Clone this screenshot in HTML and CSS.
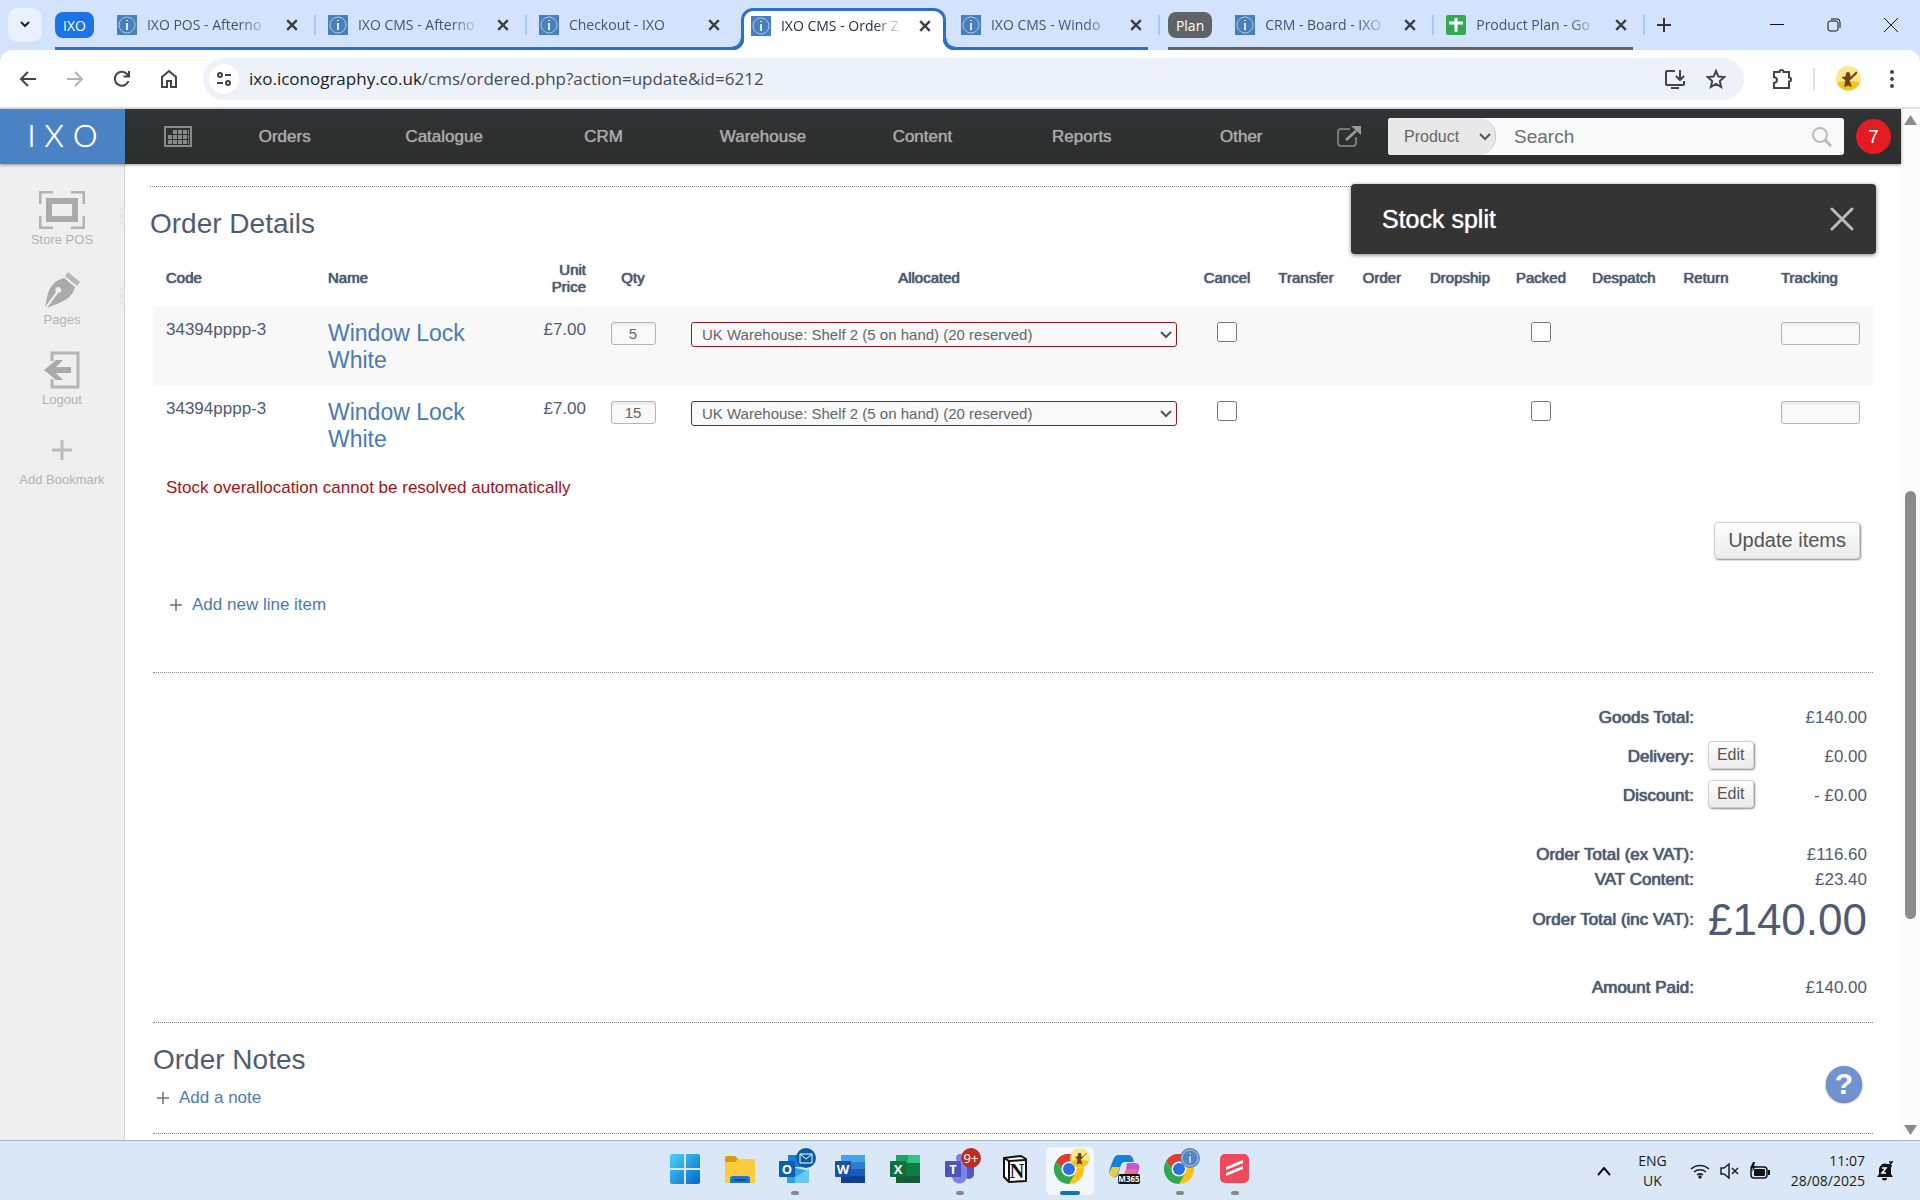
FILE: index.html
```html
<!DOCTYPE html>
<html lang="en">

<head>
    <meta charset="utf-8">
    <title>IXO CMS - Order</title>
    <meta name="viewport" content="width=device-width, initial-scale=1">
    <link rel="stylesheet" href="styles.css">
</head>

<body>
    <!-- Icons used more than once -->
    <svg class="defs" aria-hidden="true">
        <symbol id="ixo" viewBox="0 0 20 20">
            <rect width="20" height="20" fill="#4a7fbd" />
            <circle cx="10" cy="10" r="8" fill="none" stroke="#a9c8ec" />
            <path d="M10 8v7M10 5v1" stroke="#dceaff" stroke-width="2" />
        </symbol>
        <symbol id="cross" viewBox="0 0 10 10">
            <path d="M1 1l8 8M9 1l-8 8" fill="none" stroke="currentColor" stroke-width="2" />
        </symbol>
        <symbol id="plus" viewBox="0 0 12 12">
            <path d="M6 0v12M0 6h12" fill="none" stroke="currentColor" stroke-width="1.5" />
        </symbol>
        <symbol id="chrome" viewBox="0 0 30 30">
            <path d="M15 15L2 7.500A15 15 0 0 1 28 7.500H15z" fill="#e33b2e" />
            <path d="M15 15L28 7.500A15 15 0 0 1 15 30l-1-6z" fill="#fbc116" />
            <path d="M2 7.500A15 15 0 0 0 15 30l6.500-11.200L8.500 18.800z" fill="#2da94f" />
            <path d="M2 7.500l6.500 11.300L12 8z" fill="#2da94f" />
            <path d="M2 7.500A15 15 0 0 1 28 7.500H15a7.500 7.500 0 0 0-7 5z" fill="#e33b2e" />
            <circle cx="15" cy="15" r="7.500" fill="#fff" />
            <circle cx="15" cy="15" r="6" fill="#2a6fe8" />
        </symbol>
        <symbol id="avatar" viewBox="0 0 24 24">
            <circle cx="12" cy="12" r="12" fill="#fbe78c" />
            <path d="M1 16a12 12 0 0 0 22 0c-6-2-15-2-22 0z" fill="#f2c521" />
            <path d="M8 19l1-5-2-2 2-2 1-4h3l1 4 1 2-2 2 2 5z" fill="#71401a" />
            <path d="M6 11l8 1 6-6M9 19v1M14 19v1" fill="none" stroke="#71401a" />
        </symbol>
    </svg>

    <!-- Browser tabs -->
    <header class="tab-strip">
        <button class="tab-search" aria-label="Search tabs"><svg width="12" height="12" viewBox="0 0 12 12"><path d="M2 4l4 4 4-4" fill="none" stroke="#222" stroke-width="2" /></svg></button>
        <div class="tab-group">
            <button class="chip">IXO</button>
            <div class="tab"><svg class="favicon"><use href="#ixo" /></svg><span>IXO POS - Afterno</span><button aria-label="Close tab"><svg><use href="#cross" /></svg></button></div>
            <div class="tab"><svg class="favicon"><use href="#ixo" /></svg><span>IXO CMS - Afterno</span><button aria-label="Close tab"><svg><use href="#cross" /></svg></button></div>
            <div class="tab no-line"><svg class="favicon"><use href="#ixo" /></svg><span>Checkout - IXO</span><button aria-label="Close tab"><svg><use href="#cross" /></svg></button></div>
            <div class="tab active"><svg class="favicon"><use href="#ixo" /></svg><span>IXO CMS - Order Z</span><button aria-label="Close tab"><svg><use href="#cross" /></svg></button></div>
            <div class="tab"><svg class="favicon"><use href="#ixo" /></svg><span>IXO CMS - Windo</span><button aria-label="Close tab"><svg><use href="#cross" /></svg></button></div>
        </div>
        <div class="tab-group plan">
            <button class="chip">Plan</button>
            <div class="tab"><svg class="favicon"><use href="#ixo" /></svg><span>CRM - Board - IXO</span><button aria-label="Close tab"><svg><use href="#cross" /></svg></button></div>
            <div class="tab"><svg class="favicon" viewBox="0 0 20 20"><rect width="20" height="20" rx="2" fill="#34a853" /><path d="M10 3v14M3 8h14" stroke="#fff" stroke-width="3" /></svg><span>Product Plan - Go</span><button aria-label="Close tab"><svg><use href="#cross" /></svg></button></div>
        </div>
        <button class="new-tab" aria-label="New tab"><svg width="14" height="14" viewBox="0 0 14 14"><path d="M7 0v14M0 7h14" stroke="#333" stroke-width="2" /></svg></button>
        <div class="window-buttons">
            <button aria-label="Minimise"><svg width="14" height="14" viewBox="0 0 14 14"><path d="M0 6.500h14" stroke="#111" /></svg></button>
            <button aria-label="Restore"><svg width="14" height="14" viewBox="0 0 14 14" fill="none" stroke="#111"><rect x="1" y="3" width="10" height="10" rx="2" /><path d="M4 1h6a3 3 0 0 1 3 3v6" /></svg></button>
            <button aria-label="Close"><svg width="14" height="14" viewBox="0 0 14 14"><path d="M0 0l14 14M14 0L0 14" stroke="#111" /></svg></button>
        </div>
    </header>

    <!-- Address bar -->
    <div class="toolbar">
        <button aria-label="Back"><svg width="20" height="20" viewBox="0 0 20 20"><path d="M18 10H3M10 3l-7 7 7 7" /></svg></button>
        <button class="faded" aria-label="Forward"><svg width="20" height="20" viewBox="0 0 20 20"><path d="M2 10h15M10 3l7 7-7 7" /></svg></button>
        <button aria-label="Reload"><svg width="20" height="20" viewBox="0 0 20 20"><path d="M16.500 12A7 7 0 1 1 15 5l2 2M17 2v5.500h-5.500" /></svg></button>
        <button aria-label="Home"><svg width="20" height="20" viewBox="0 0 20 20"><path d="M3 8l7-6 7 6v10h-5v-6H8v6H3z" /></svg></button>
        <div class="omnibox">
            <button class="site-info" aria-label="Site information"><svg width="18" height="18" viewBox="0 0 18 18"><circle cx="5" cy="5" r="2" /><path d="M10 5h6M2 13h6" /><circle cx="13" cy="13" r="2" /></svg></button>
            <div class="url"><b>ixo.iconography.co.uk</b>/cms/ordered.php?action=update&amp;id=6212</div>
            <button aria-label="Install app"><svg width="22" height="22" viewBox="0 0 22 22"><path d="M11 3H3a1 1 0 0 0-1 1v12a1 1 0 0 0 1 1h16a1 1 0 0 0 1-1v-3M7 20h8M16 2v9M12 8l4 4 4-4" /></svg></button>
            <button aria-label="Bookmark this tab"><svg width="20" height="20" viewBox="0 0 20 20"><path d="M10 2l2.400 5.600 6 .5-4.600 4 1.400 5.900L10 15l-5.200 3 1.400-5.900-4.600-4 6-.5z" /></svg></button>
        </div>
        <button class="extensions" aria-label="Extensions"><svg width="22" height="22" viewBox="0 0 22 22"><path d="M3 4h5.500a2 2 0 0 1 4 0H18v5.500a2 2 0 0 1 0 4V20H3v-5c4-.500 4-5.500 0-6z" /></svg></button>
        <button class="profile" aria-label="Profile"><svg width="25" height="25"><use href="#avatar" /></svg></button>
        <button aria-label="Menu"><svg width="20" height="20" viewBox="0 0 20 20"><g fill="#444" stroke="none"><circle cx="10" cy="3" r="2" /><circle cx="10" cy="10" r="2" /><circle cx="10" cy="17" r="2" /></g></svg></button>
    </div>

    <div class="page">
        <div class="app">
            <header class="app-header">
                <a class="logo" href="#"><span>I</span><span>X</span><span>O</span></a>
                <a class="calendar" href="#" aria-label="Calendar"><svg width="28" height="21" viewBox="0 0 28 21"><rect x="1" y="1" width="26" height="19" fill="none" stroke="#8a8a8a" stroke-width="2" /><path d="M9 6h16M4 11h21M4 16h21" stroke="#8a8a8a" stroke-width="4" stroke-dasharray="4 1" /></svg></a>
                <nav>
                    <a href="#">Orders</a>
                    <a href="#">Catalogue</a>
                    <a href="#">CRM</a>
                    <a href="#">Warehouse</a>
                    <a href="#">Content</a>
                    <a href="#">Reports</a>
                    <a href="#">Other</a>
                </nav>
                <a class="external" href="#" aria-label="Open site"><svg width="26" height="22" viewBox="0 0 26 22"><path d="M14 3H5a3 3 0 0 0-3 3v11a3 3 0 0 0 3 3h12a3 3 0 0 0 3-3v-6" fill="none" stroke="#777" stroke-width="2" /><path d="M10 14L20 5" stroke="#999" stroke-width="3" /><path d="M15 0h10v9z" fill="#999" /></svg></a>
                <form class="search">
                    <select aria-label="Search in">
                        <option>Product</option>
                    </select>
                    <input type="text" placeholder="Search" aria-label="Search">
                    <button type="button" aria-label="Search"><svg width="20" height="20" viewBox="0 0 20 20" fill="none" stroke="#bbb"><circle cx="8" cy="8" r="7" stroke-width="2" /><path d="M13 13l6 6" stroke-width="3" /></svg></button>
                </form>
                <button class="alerts">7</button>
            </header>

            <div class="columns">
                <aside class="sidebar">
                    <a class="grip" href="#"><svg width="46" height="38" viewBox="0 0 46 38"><path d="M1 13V1h13M32 1h13v12M45 25v12H32M14 37H1V25" fill="none" stroke="#b3b3b3" stroke-width="3" /><rect x="10" y="10" width="26" height="18" fill="none" stroke="#aaa" stroke-width="6" /></svg>Store POS</a>
                    <a class="grip" href="#"><svg width="36" height="38" viewBox="0 0 36 38"><path d="M24 1l12 10-3 4L21 5z" fill="#b9b9b9" /><path d="M20 7l11 9c-2 8-8 13-16 16L3 37l11-15a3 3 0 1 0-2-1L1 36l3-14C7 14 12 9 20 7z" fill="#aaa" /></svg>Pages</a>
                    <a href="#"><svg width="36" height="38" viewBox="0 0 36 38"><path d="M8 10V2h26v34H8v-8" fill="none" stroke="#b5b5b5" stroke-width="3" /><path d="M0 19l12-10h7l-7 7h15v6H12l7 7h-7z" fill="#aaa" /></svg>Logout</a>
                    <a href="#"><svg width="20" height="38" viewBox="0 0 20 38"><path d="M10 9v20M0 19h20" stroke="#bbb" stroke-width="3" /></svg>Add Bookmark</a>
                </aside>

                <main>
                    <section class="order-details">
                        <h2>Order Details</h2>
                        <table class="items">
                            <colgroup>
                                <col class="col-code">
                                <col class="col-name">
                                <col class="col-price">
                                <col class="col-qty">
                                <col>
                                <col class="col-cancel">
                                <col class="col-transfer">
                                <col class="col-order">
                                <col class="col-dropship">
                                <col class="col-packed">
                                <col class="col-despatch">
                                <col class="col-return">
                                <col class="col-tracking">
                            </colgroup>
                            <thead>
                                <tr>
                                    <th class="left">Code</th>
                                    <th class="left">Name</th>
                                    <th class="price">Unit Price</th>
                                    <th>Qty</th>
                                    <th>Allocated</th>
                                    <th>Cancel</th>
                                    <th>Transfer</th>
                                    <th>Order</th>
                                    <th>Dropship</th>
                                    <th>Packed</th>
                                    <th>Despatch</th>
                                    <th>Return</th>
                                    <th class="tracking">Tracking</th>
                                </tr>
                            </thead>
                            <tbody>
                                <tr>
                                    <td class="left">34394pppp-3</td>
                                    <td class="left"><a href="#">Window Lock White</a></td>
                                    <td class="price">£7.00</td>
                                    <td><input class="qty" type="text" value="5" aria-label="Qty"></td>
                                    <td class="allocated"><select aria-label="Allocated"><option>UK Warehouse: Shelf 2 (5 on hand) (20 reserved)</option></select></td>
                                    <td><input type="checkbox" aria-label="Cancel"></td>
                                    <td></td>
                                    <td></td>
                                    <td></td>
                                    <td><input type="checkbox" aria-label="Packed"></td>
                                    <td></td>
                                    <td></td>
                                    <td class="tracking"><input type="text" aria-label="Tracking"></td>
                                </tr>
                                <tr>
                                    <td class="left">34394pppp-3</td>
                                    <td class="left"><a href="#">Window Lock White</a></td>
                                    <td class="price">£7.00</td>
                                    <td><input class="qty" type="text" value="15" aria-label="Qty"></td>
                                    <td class="allocated"><select aria-label="Allocated"><option>UK Warehouse: Shelf 2 (5 on hand) (20 reserved)</option></select></td>
                                    <td><input type="checkbox" aria-label="Cancel"></td>
                                    <td></td>
                                    <td></td>
                                    <td></td>
                                    <td><input type="checkbox" aria-label="Packed"></td>
                                    <td></td>
                                    <td></td>
                                    <td class="tracking"><input type="text" aria-label="Tracking"></td>
                                </tr>
                            </tbody>
                        </table>
                        <p class="error">Stock overallocation cannot be resolved automatically</p>
                        <div class="actions"><button class="button large">Update items</button></div>
                        <a class="add line-item" href="#"><svg><use href="#plus" /></svg>Add new line item</a>
                    </section>

                    <section class="totals">
                        <table>
                            <tr>
                                <th>Goods Total:</th>
                                <td></td>
                                <td>£140.00</td>
                            </tr>
                            <tr>
                                <th>Delivery:</th>
                                <td class="edit"><button class="button">Edit</button></td>
                                <td>£0.00</td>
                            </tr>
                            <tr>
                                <th>Discount:</th>
                                <td class="edit"><button class="button">Edit</button></td>
                                <td>- £0.00</td>
                            </tr>
                            <tbody class="vat">
                                <tr>
                                    <th>Order Total (ex VAT):</th>
                                    <td></td>
                                    <td>£116.60</td>
                                </tr>
                                <tr>
                                    <th>VAT Content:</th>
                                    <td></td>
                                    <td>£23.40</td>
                                </tr>
                                <tr class="grand">
                                    <th>Order Total (inc VAT):</th>
                                    <td colspan="2">£140.00</td>
                                </tr>
                            </tbody>
                            <tbody class="paid">
                                <tr>
                                    <th>Amount Paid:</th>
                                    <td></td>
                                    <td>£140.00</td>
                                </tr>
                            </tbody>
                        </table>
                    </section>

                    <section class="notes">
                        <h2>Order Notes</h2>
                        <a class="add" href="#"><svg><use href="#plus" /></svg>Add a note</a>
                    </section>
                    <section class="next"></section>
                </main>
            </div>

            <div class="notification" role="status">
                Stock split
                <button aria-label="Dismiss"><svg width="24" height="24" viewBox="0 0 24 24"><path d="M2 2l20 20M22 2L2 22" stroke="#bbb" stroke-width="3" stroke-linecap="round" /></svg></button>
            </div>
            <button class="help" aria-label="Help">?</button>
        </div>

        <div class="scrollbar">
            <svg width="13" height="10" viewBox="0 0 13 10"><path d="M6.500 0L13 10H0z" fill="#8a8a8a" /></svg>
            <div class="thumb"></div>
            <svg width="13" height="10" viewBox="0 0 13 10"><path d="M0 0h13L6.500 10z" fill="#8a8a8a" /></svg>
        </div>
    </div>

    <!-- Windows taskbar -->
    <footer class="taskbar">
        <div class="tray-space"></div>
        <div class="apps">
            <button aria-label="Start"><svg viewBox="0 0 40 40"><defs><linearGradient id="win" x2="1" y2="1"><stop stop-color="#4fd0f8" /><stop offset="1" stop-color="#0068d0" /></linearGradient></defs><path d="M7 5h12v14H5V7a2 2 0 0 1 2-2zM21 5h12a2 2 0 0 1 2 2v12H21zM5 21h14v14H7a2 2 0 0 1-2-2zM21 21h14v12a2 2 0 0 1-2 2H21z" fill="url(#win)" /></svg></button>
            <button aria-label="File Explorer"><svg viewBox="0 0 40 40"><path d="M5 9a2 2 0 0 1 2-2h8l3 3v4H5z" fill="#d99a0c" /><path d="M5 13h10l3-3h15a2 2 0 0 1 2 2v22H5z" fill="#fdcb3f" /><path d="M10 34v-4a3 3 0 0 1 3-3h14a3 3 0 0 1 3 3v4z" fill="#1a78c8" /><path d="M14 31h12" stroke="#0b4c8c" stroke-width="2" /></svg></button>
            <button class="running" aria-label="Outlook"><svg viewBox="0 0 40 40"><path d="M13 6h20v12H13z" fill="#1a7fd4" /><path d="M12 17l22 5v10a2 2 0 0 1-2 2H12z" fill="#2ea3ea" /><path d="M20 28l14-8v12a2 2 0 0 1-2 2H20z" fill="#65c8f5" /><rect x="4" y="12" width="16" height="16" rx="1" fill="#0b5fb0" /><text x="12" y="25" class="letter">O</text><circle cx="31" cy="9" r="10" fill="#0b5aa6" /><path d="M25 5h12v9H25zl6 5 6-5" fill="none" stroke="#fff" /></svg></button>
            <button aria-label="Word"><svg viewBox="0 0 40 40"><path d="M11 6h24v8H11z" fill="#41a5ee" /><path d="M11 13h24v7H11z" fill="#2b7cd3" /><path d="M11 20h24v7H11z" fill="#185abd" /><path d="M11 27h24v7H11z" fill="#103f91" /><rect x="5" y="12" width="16" height="16" rx="1" fill="#1650a8" /><text x="13" y="25" class="letter">W</text></svg></button>
            <button aria-label="Excel"><svg viewBox="0 0 40 40"><path d="M11 6h24v28H11z" fill="#107c41" /><path d="M23 6h12v8H23z" fill="#33c481" /><path d="M11 6h12v8H11z" fill="#21a366" /><path d="M11 27h24v7H11z" fill="#185c37" /><rect x="5" y="12" width="16" height="16" rx="1" fill="#0f703b" /><text x="13" y="25" class="letter">X</text></svg></button>
            <button class="running" aria-label="Teams"><svg viewBox="0 0 40 40"><path d="M24 15h10v10a5 5 0 0 1-10 0z" fill="#5059c9" /><path d="M12 14h15v12a7 7 0 0 1-15 2z" fill="#7b83eb" /><circle cx="20" cy="9" r="4" fill="#7b83eb" /><rect x="5" y="12" width="16" height="16" rx="1" fill="#4b53bc" /><text x="13" y="25" class="letter">T</text><circle cx="31" cy="9" r="10" fill="#c22b23" /><text x="31" y="14" class="count">9+</text></svg></button>
            <button aria-label="Notion"><svg viewBox="0 0 40 40"><path d="M9 9l17-2 5 3v22l-17 1-5-5z" fill="#fff" stroke="#111" stroke-width="2" stroke-linejoin="round" /><path d="M9 9l5 3 17-1M14 12v21" stroke="#111" stroke-width="2" fill="none" /><text x="22" y="29" class="notion">N</text></svg></button>
            <button class="running current" aria-label="Chrome"><svg viewBox="0 0 40 40"><use href="#chrome" x="4" y="5" width="30" height="30" /><use href="#avatar" x="20" y="-1" width="20" height="20" /></svg></button>
            <button aria-label="Microsoft 365"><svg viewBox="0 0 40 40"><path d="M13 6h10c4 0 5 3 6 7h-9c-3 0-4 2-5 6l-2 6c-1 3-3 4-5 3-4-2-4-5-3-9l3-8c1-3 3-5 5-5z" fill="#1681d8" /><path d="M7 18h8l-3 8c-1 3-8 3-8-2z" fill="#e5cf48" /><path d="M22 14h8c4 0 5 3 4 6l-3 9c-1 4-4 5-7 5h-9c3 0 4-3 5-7z" fill="#c456d8" /><path d="M19 26l2-6h11l-3 8z" fill="#f0708c" /><rect x="13" y="25" width="22" height="10" rx="2" fill="#111" /><text x="24" y="33" class="m365">M365</text></svg></button>
            <button class="running" aria-label="Chrome"><svg viewBox="0 0 40 40"><use href="#chrome" x="4" y="5" width="30" height="30" /><circle cx="30" cy="9" r="10" fill="#5584be" /><circle cx="30" cy="9" r="8" fill="none" stroke="#a9c8ec" /><path d="M30 7v7M30 4v1" stroke="#a9c8ec" stroke-width="2" /></svg></button>
            <button class="running" aria-label="App"><svg viewBox="0 0 40 40"><rect x="5" y="5" width="29" height="29" rx="5" fill="#f0485c" /><path d="M11 18l12-5v3l-12 5zM16 22l12-5v3l-12 5zM11 24l12-5v3l-12 5zM16 16l12-5v3l-12 5z" fill="#fff" /></svg></button>
        </div>
        <div class="tray">
            <button aria-label="Hidden icons"><svg width="14" height="10" viewBox="0 0 14 10"><path d="M1 9l6-7 6 7" fill="none" stroke="#111" stroke-width="2" /></svg></button>
            <div class="language">ENG<br>UK</div>
            <div class="status">
                <svg width="20" height="18" viewBox="0 0 20 18" fill="none" stroke="#222" stroke-width="1.500"><path d="M1 7a13 13 0 0 1 18 0M4 10a9 9 0 0 1 12 0M7 13a5 5 0 0 1 6 0" /><circle cx="10" cy="15" r="1" fill="#222" /></svg>
                <svg width="20" height="18" viewBox="0 0 20 18" fill="none" stroke="#222" stroke-width="1.500"><path d="M1 6h3l5-4v14l-5-4H1zM12 6l6 6M18 6l-6 6" /></svg>
                <svg width="20" height="18" viewBox="0 0 20 18"><rect x="1" y="5" width="16" height="11" rx="3" fill="none" stroke="#111" stroke-width="1.500" /><rect x="4" y="7" width="11" height="7" rx="1" fill="#111" /><path d="M18 8h2v5h-2zM3 0l-3 6h3l-1 4 4-6H4l1-4z" fill="#111" /></svg>
            </div>
            <div class="clock">11:07<br>28/08/2025</div>
            <svg width="18" height="20" viewBox="0 0 18 20"><path d="M1 16l2-3V8a6 6 0 0 1 8-5h4v10l2 3zM6 17h5a2 2 0 0 1-5 0z" fill="#111" /><path d="M6 7h4l-4 5h4" fill="none" stroke="#fff" stroke-width="1.500" /><path d="M13 1h3l-3 4h3" fill="none" stroke="#111" stroke-width="1.500" /></svg>
        </div>
    </footer>
</body>

</html>
```
FILE: styles.css
```css
* {
    box-sizing: border-box;
}

body {
    margin: 0;
    height: 100vh;
    display: flex;
    flex-direction: column;
    overflow: hidden;
    background-color: #d3e3fd;
    font-family: "Liberation Sans", Arial, Helvetica, sans-serif;
    font-size: 17px;
    line-height: 20px;
    color: #4f5b72;
}

button {
    font-family: inherit;
    padding: 0;
    border: none;
    background: none;
}

a {
    color: #4a7ab5;
    text-decoration: none;
}

.defs {
    position: absolute;
    width: 0;
    height: 0;
}

/* Browser */
.tab-strip,
.toolbar,
.taskbar {
    font-family: "Open Sans", "Noto Sans", sans-serif;
    flex: none;
}

.tab-strip {
    display: flex;
    align-items: center;
    height: 50px;
    padding-left: 8px;
    font-size: 14px;
}

.tab-search {
    width: 34px;
    height: 34px;
    margin-right: 13px;
    border-radius: 10px;
    background-color: #e9f0fe;
}

.tab-group {
    display: flex;
    align-items: center;
    height: 50px;
    background: linear-gradient(#2b71cb, #2b71cb) left bottom / calc(100% - 12px) 3px no-repeat;
}

.tab-group.plan {
    margin-left: 8px;
    background-image: linear-gradient(#5f6368, #5f6368);
}

.chip {
    height: 26px;
    margin-right: 11px;
    padding: 0 8px;
    border-radius: 8px;
    background-color: #1a73e8;
    color: white;
    font-size: 14px;
}

.plan .chip {
    background-color: #5f6368;
}

.tab {
    position: relative;
    display: flex;
    align-items: center;
    width: 211px;
    height: 50px;
    padding: 0 18px 0 12px;
    color: #46546b;
}

.tab::after {
    content: "";
    position: absolute;
    right: 0;
    top: 15px;
    width: 2px;
    height: 20px;
    background-color: #a8c7fa;
}

.tab.no-line::after {
    display: none;
}

.favicon {
    flex: none;
    width: 20px;
    height: 20px;
    margin-right: 10px;
}

.tab span {
    flex: 1;
    overflow: hidden;
    white-space: nowrap;
    margin-right: 14px;
    -webkit-mask-image: linear-gradient(to right, black 75%, transparent 98%);
    mask-image: linear-gradient(to right, black 75%, transparent 98%);
}

.tab button svg {
    display: block;
    width: 12px;
    height: 12px;
    color: #3c4043;
}

.tab.active {
    width: 205px;
    height: 42px;
    margin: 8px 3px 0 3px;
    padding: 0 12px 10px 7px;
    border: 3px solid #2b71cb;
    border-bottom: none;
    border-radius: 12px 12px 0 0;
    background-color: white;
    color: #1f2a3a;
}

/* Curved feet of the open tab */
.tab.active::before,
.tab.active::after {
    content: "";
    position: absolute;
    top: auto;
    bottom: 0;
    width: 12px;
    height: 12px;
}

.tab.active::before {
    left: -12px;
    background: radial-gradient(circle at 0 0, #d3e3fd 8px, #2b71cb 9px, #2b71cb 12px, white 13px);
}

.tab.active::after {
    right: -12px;
    background: radial-gradient(circle at 100% 0, #d3e3fd 8px, #2b71cb 9px, #2b71cb 12px, white 13px);
}

.new-tab {
    margin-left: 12px;
}

.new-tab svg,
.window-buttons svg {
    display: block;
}

.window-buttons {
    display: flex;
    gap: 43px;
    margin-left: auto;
    margin-right: 22px;
}

.toolbar {
    display: flex;
    align-items: center;
    gap: 27px;
    height: 59px;
    padding: 0 18px;
    border-bottom: 2px solid #dfe5e6;
    border-radius: 12px 12px 0 0;
    background-color: white;
}

.toolbar svg {
    display: block;
    fill: none;
    stroke: #444;
    stroke-width: 2;
}

.toolbar .faded {
    opacity: 0.4;
}

.omnibox {
    flex: 1;
    display: flex;
    align-items: center;
    gap: 20px;
    height: 42px;
    margin-left: -3px;
    padding: 0 18px 0 6px;
    border-radius: 21px;
    background-color: #edf1fa;
}

.site-info {
    width: 30px;
    height: 30px;
    padding-left: 6px;
    border-radius: 15px;
    background-color: white;
}

.url {
    flex: 1;
    margin-left: -10px;
    font-size: 17px;
    color: #474c55;
}

.url b {
    font-weight: normal;
    color: #202124;
}

.extensions {
    padding-right: 20px;
    border-right: 2px solid #d3e3fd;
}

.toolbar .profile svg {
    stroke: none;
}

.toolbar .profile,
.toolbar .extensions {
    margin-right: -6px;
}

/* App */
.page {
    flex: 1;
    min-height: 0;
    display: flex;
    background-color: white;
}

.app {
    position: relative;
    flex: 1;
    display: flex;
    flex-direction: column;
}

.app-header {
    flex: none;
    position: relative;
    display: flex;
    align-items: center;
    height: 55px;
    padding-right: 10px;
    background: linear-gradient(#303434, #2d2d2d);
    box-shadow: 0 1px 3px rgba(0, 0, 0, 0.4);
}

.logo {
    display: flex;
    justify-content: center;
    align-items: center;
    gap: 9px;
    width: 125px;
    height: 55px;
    padding-bottom: 3px;
    background-color: #4b82c3;
    color: white;
    font-family: Lato, sans-serif;
    font-weight: 300;
    font-size: 31px;
    text-shadow: 0 0 1px white;
}

.calendar {
    width: 80px;
    padding-left: 39px;
}

.calendar svg,
.external svg {
    display: block;
}

.app-header nav {
    flex: 1;
    display: grid;
    grid-template-columns: repeat(7, 1fr);
    text-align: center;
}

.app-header nav a {
    color: #aaa;
    text-shadow: 0 0 1px #aaa;
}

.external {
    width: 67px;
    padding-left: 15px;
}

.search {
    display: flex;
    align-items: center;
    width: 456px;
    height: 37px;
    margin-right: 12px;
    border-radius: 3px;
    overflow: hidden;
    background-color: #f9f9f9;
}

.search select,
.allocated select {
    appearance: none;
    background-repeat: no-repeat;
    background-image: url("data:image/svg+xml,%3Csvg xmlns='http://www.w3.org/2000/svg' width='12' height='8'%3E%3Cpath d='M1 1l5 5 5-5' fill='none' stroke='%23555' stroke-width='2'/%3E%3C/svg%3E");
    font-family: inherit;
    color: #666;
}

.search select {
    width: 108px;
    height: 37px;
    padding: 0 16px;
    border: none;
    border-right: 1px solid #ccc;
    border-radius: 0 18px 18px 0;
    background-color: #e8e8e8;
    background-position: right 4px center;
    font-size: 16px;
}

.search input {
    flex: 1;
    min-width: 0;
    padding: 0 18px;
    border: none;
    background: none;
    font-family: inherit;
    font-size: 19px;
}

.search input::placeholder {
    color: #6e6e6e;
}

.search button {
    margin-right: 12px;
}

.search button svg {
    display: block;
}

.alerts {
    width: 35px;
    height: 35px;
    border-radius: 50%;
    background-color: #e31b23;
    color: white;
    font-size: 19px;
}

.columns {
    flex: 1;
    min-height: 0;
    display: flex;
}

.sidebar {
    flex: none;
    width: 125px;
    padding-top: 27px;
    border-right: 1px solid #d5d5d5;
    background-color: #efefef;
}

.sidebar a {
    position: relative;
    display: flex;
    flex-direction: column;
    align-items: center;
    gap: 1px;
    height: 80px;
    font-size: 13px;
    color: #b4b4b4;
}

/* Drag handle */
.sidebar .grip::after {
    content: "";
    position: absolute;
    right: 0;
    top: 16px;
    height: 18px;
    border-right: 4px dotted #e4e4e4;
}

main {
    flex: 1;
    overflow: hidden;
}

h2 {
    margin: 0;
    font-size: 28px;
    line-height: 32px;
    font-weight: normal;
}

section {
    margin: 0 28px;
    border-top: 1px dotted #888;
}

.order-details {
    margin: 22px 28px 0 25px;
    padding: 21px 0 57px 0;
}

.items {
    width: calc(100% - 3px);
    margin: 8px 0 0 3px;
    table-layout: fixed;
    border-collapse: collapse;
}

.col-code { width: 162px; }
.col-name { width: 210px; }
.col-price { width: 74px; }
.col-qty { width: 68px; }
.col-cancel { width: 72px; }
.col-transfer { width: 86px; }
.col-order { width: 66px; }
.col-dropship { width: 90px; }
.col-packed { width: 72px; }
.col-despatch { width: 94px; }
.col-return { width: 70px; }
.col-tracking { width: 132px; }

.items th {
    height: 59px;
    padding: 0;
    font-size: 15px;
    line-height: 17px;
    font-weight: normal;
    text-shadow: 0 0 1px #4f5b72, 0 0 1px #4f5b72;
}

.items td {
    height: 79px;
    padding: 13px 0 0 0;
    vertical-align: top;
    text-align: center;
}

.items tbody tr:nth-child(odd) {
    background-color: #f8f8f8;
}

.items .left {
    padding-left: 13px;
    padding-right: 13px;
    text-align: left;
}

.items .price {
    padding-left: 13px;
    padding-right: 13px;
    text-align: right;
}

.items td a {
    font-size: 23px;
    line-height: 27px;
}

.items .tracking {
    padding-left: 40px;
    padding-right: 13px;
    text-align: left;
}

.items input,
.allocated select {
    display: block;
    margin: 2px auto 0 auto;
}

.items input[type="text"] {
    width: 100%;
    height: 23px;
    border: 1px solid #b5b5b5;
    border-radius: 3px;
    background-color: #f9f9f9;
    box-shadow: inset 0 2px 2px #e8e8e8;
    font-family: inherit;
    font-size: 15px;
    color: #666;
}

.items input.qty {
    width: 45px;
    text-align: center;
}

.items input[type="checkbox"] {
    width: 20px;
    height: 20px;
}

.items .allocated {
    padding-left: 24px;
    padding-right: 14px;
}

.allocated select {
    width: 100%;
    height: 25px;
    padding: 0 10px;
    border: 1px solid #a3121f;
    border-radius: 3px;
    background-color: #f9f9f9;
    background-position: right 4px center;
    font-size: 15px;
}

.error {
    margin: 13px 0 0 13px;
    padding-left: 3px;
    color: #a80f14;
}

.actions {
    margin: 24px 13px 36px 0;
    text-align: right;
}

.button {
    height: 28px;
    padding: 0 8px;
    border: 1px solid #d0d0d0;
    border-radius: 4px;
    background: linear-gradient(#fff, #ebebeb);
    box-shadow: 1px 1px 2px #888;
    font-size: 16px;
    color: #555;
}

.button.large {
    display: inline-block;
    vertical-align: top;
    height: 37px;
    padding: 0 13px;
    font-size: 20px;
}

.add {
    display: flex;
    align-items: center;
    gap: 10px;
    margin-left: 4px;
}

.add svg {
    width: 12px;
    height: 12px;
    color: #68707c;
}

.line-item {
    margin-left: 20px;
}

.totals {
    padding: 25px 6px 15px 0;
}

.totals table {
    margin-left: auto;
    border-collapse: collapse;
}

.totals th,
.totals td {
    height: 39px;
    padding: 0;
    text-align: right;
}

.totals th {
    padding-right: 14px;
    font-weight: normal;
    text-shadow: 0 0 1px #4f5b72, 0 0 1px #4f5b72;
}

.totals .edit {
    padding-bottom: 4px;
    text-align: left;
}

.totals .vat th,
.totals .vat td {
    height: 25px;
}

.totals .vat::before,
.totals .paid::before {
    content: "";
    display: block;
    height: 27px;
}

.totals .paid::before {
    height: 20px;
}

.totals .grand th,
.totals .grand td {
    height: 56px;
}

.totals .grand td {
    font-size: 44px;
    line-height: 48px;
}

.notes {
    padding: 21px 0 25px 0;
}

.notes h2 {
    margin-bottom: 12px;
}

.notification {
    position: absolute;
    top: 75px;
    right: 25px;
    display: flex;
    align-items: center;
    justify-content: space-between;
    width: 525px;
    height: 70px;
    padding: 0 22px 0 31px;
    border-radius: 4px;
    background-color: #343434;
    box-shadow: 0 1px 4px rgba(0, 0, 0, 0.5);
    font-size: 25px;
    color: white;
    text-shadow: 0 0 1px white;
}

.notification svg {
    display: block;
}

.help {
    position: absolute;
    right: 39px;
    bottom: 38px;
    width: 36px;
    height: 36px;
    border-radius: 50%;
    background-color: #7092d2;
    box-shadow: 0 1px 2px #556;
    color: white;
    font-size: 30px;
    font-weight: bold;
}

.scrollbar {
    display: flex;
    flex-direction: column;
    align-items: center;
    width: 19px;
    padding: 6px 0 5px 0;
    background-color: #fcfcfc;
}

.thumb {
    width: 11px;
    height: 42%;
    margin-top: 366px;
    margin-bottom: auto;
    border-radius: 6px;
    background-color: #8b8b8b;
}

/* Taskbar */
.taskbar {
    display: flex;
    align-items: center;
    height: 60px;
    border-top: 1px solid #a9b7c4;
    background-color: #dae7f6;
    font-size: 14px;
    color: #1b1b1b;
}

.tray-space,
.tray {
    flex: 1;
}

.apps {
    display: flex;
    gap: 7px;
    padding-left: 26px;
}

.apps button {
    position: relative;
    width: 48px;
    height: 48px;
    border-radius: 5px;
}

.apps svg {
    display: block;
    width: 40px;
    height: 40px;
    margin: -4px 4px 0 4px;
    overflow: visible;
}

.apps .current {
    background-color: #f2f7fd;
}

.running::after {
    content: "";
    position: absolute;
    left: 20px;
    bottom: 0;
    width: 8px;
    height: 4px;
    border-radius: 2px;
    background-color: #85898e;
}

.current::after {
    left: 14px;
    width: 20px;
    background-color: #0f72c9;
}

.letter,
.count,
.m365,
.notion {
    text-anchor: middle;
    fill: white;
    font-size: 13px;
    font-weight: bold;
}

.count {
    font-weight: normal;
}

.m365 {
    font-size: 8px;
}

.notion {
    fill: #111;
    font-family: "Liberation Serif", serif;
    font-size: 20px;
}

.tray {
    display: flex;
    justify-content: flex-end;
    align-items: center;
    padding-right: 26px;
}

.language {
    margin: 0 23px 0 27px;
    text-align: center;
}

.status {
    display: flex;
    gap: 10px;
}

.clock {
    margin: 0 11px 0 21px;
    text-align: right;
}
```
